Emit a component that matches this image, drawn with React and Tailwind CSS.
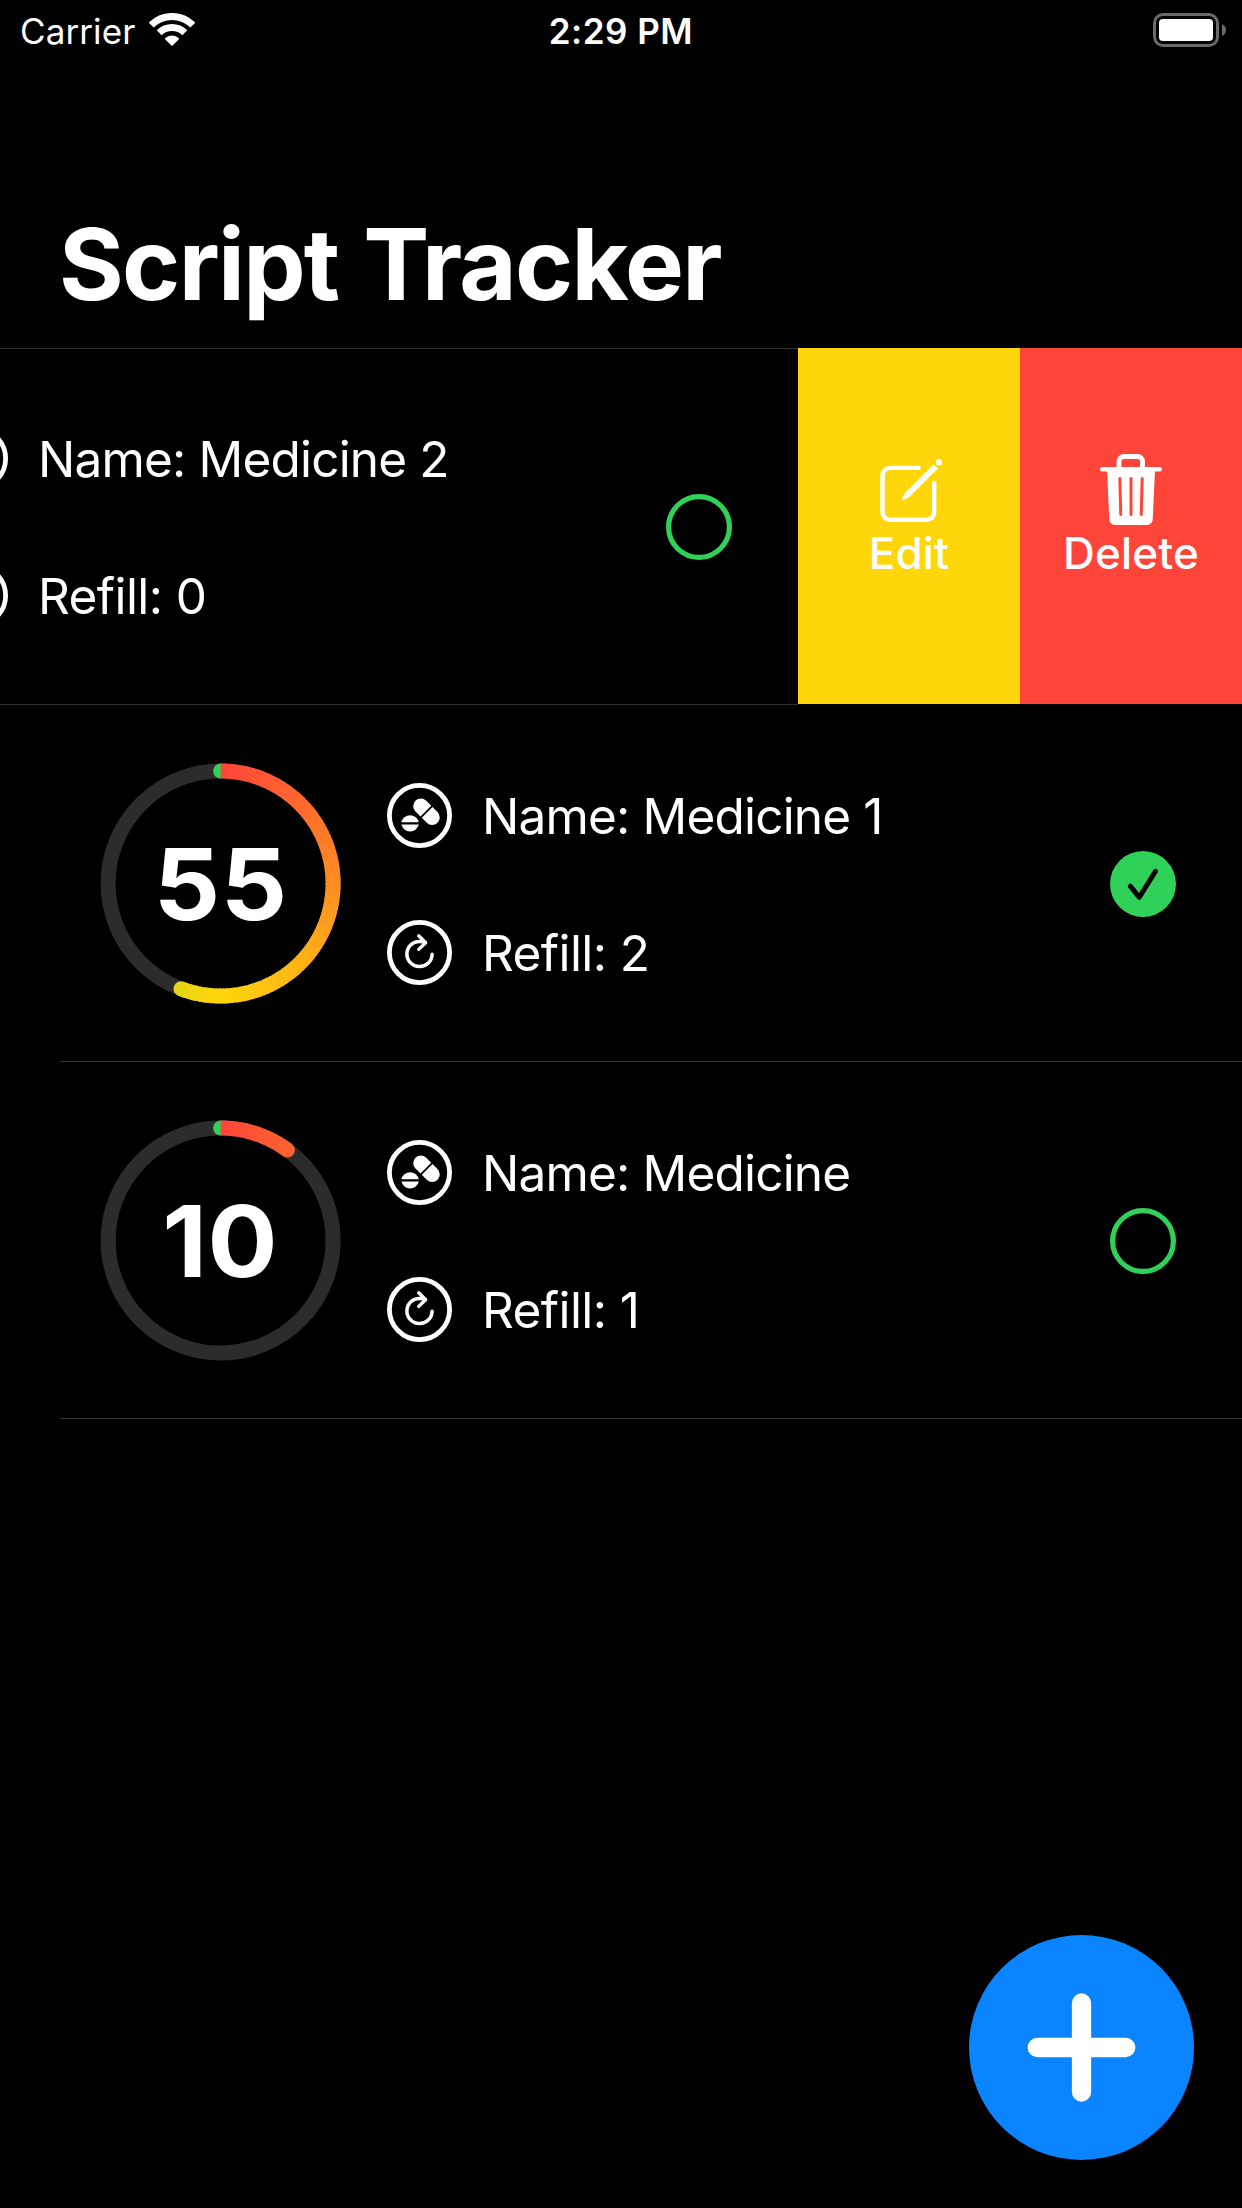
const RED = [255, 69, 58];
const YELLOW = [255, 214, 10];
const GREEN = [48, 209, 88];

const mix = (a, b, t) => `rgb(${a.map((v, i) => Math.round(v + (b[i] - v) * t)).join(",")})`;
const colorAt = (deg) =>
  deg <= 180 ? mix(RED, YELLOW, deg / 180) : mix(YELLOW, GREEN, (deg - 180) / 180);

const CX = 119.6;
const CY = 119.5;
const R = 112.5;
const point = (deg) => {
  const a = (deg * Math.PI) / 180;
  return [CX + R * Math.sin(a), CY - R * Math.cos(a)];
};

function Ring({ value, sweep }) {
  const step = 2;
  const arcs = [];
  for (let d = 0; d < sweep; d += step) {
    const [x1, y1] = point(d);
    const [x2, y2] = point(Math.min(d + step + 0.6, sweep));
    arcs.push(
      <path key={d} d={`M${x1} ${y1}A${R} ${R} 0 0 1 ${x2} ${y2}`} stroke={colorAt(d + step / 2)} />
    );
  }
  const [ex, ey] = point(sweep);
  return (
    <div className="grid size-60 shrink-0 place-items-center">
      <svg className="col-start-1 row-start-1 size-60 overflow-visible" viewBox="0 0 240 240" fill="none" strokeWidth="15">
        <circle cx={CX} cy={CY} r={R} stroke="#2c2c2c" />
        <circle cx={CX} cy={CY - R} r="7.5" fill="rgb(48,209,88)" />
        <circle cx={ex} cy={ey} r="7.5" fill={colorAt(sweep)} />
        {arcs}
      </svg>
      <span className="col-start-1 row-start-1 mr-[1px] scale-x-[1.05] text-[99px] leading-none font-bold tracking-[0.5px]">{value}</span>
    </div>
  );
}

function PillsIcon() {
  return (
    <svg className="size-[65px] shrink-0" viewBox="0 0 65 65" fill="none">
      <circle cx="32.5" cy="32.5" r="30.1" stroke="white" strokeWidth="4.8" />
      <g transform="translate(39.5 28.8) rotate(45)" fill="white">
        <path d="M-0.9 -7.6H-8a7.6 7.6 0 0 0 0 15.2H-0.9Z" />
        <path d="M0.9 -7.6H8a7.6 7.6 0 0 1 0 15.2H0.9Z" />
      </g>
      <path d="M14.4 39.2a8.9 8.9 0 0 1 17.4 0Z" fill="white" />
      <path d="M14.4 41.4a8.9 8.9 0 0 0 17.4 0Z" fill="white" />
    </svg>
  );
}

function RefillIcon() {
  return (
    <svg className="size-[65px] shrink-0" viewBox="0 0 65 65" fill="none" stroke="white" strokeLinecap="round" strokeLinejoin="round">
      <circle cx="32.5" cy="32.5" r="30.1" strokeWidth="4.8" />
      <path d="M45.1 34.2a12.6 12.6 0 1 1 -12.6 -12.8c2.2 0 3.8 .2 5.4 .7" strokeWidth="3.5" />
      <path d="M31.7 15.8l7 6.9l-7 6.7" strokeWidth="3.3" />
    </svg>
  );
}

function Status({ done }) {
  return (
    <svg className="size-[66px] shrink-0" viewBox="0 0 66 66" fill="none">
      {done ? (
        <>
          <circle cx="33" cy="33" r="33" fill="#30d158" />
          <path d="M20.3 35.1l9 11.2l16.2-26" stroke="black" strokeWidth="5" strokeLinecap="round" strokeLinejoin="round" />
        </>
      ) : (
        <circle cx="33" cy="33" r="30.4" stroke="#30d158" strokeWidth="5.2" />
      )}
    </svg>
  );
}

function Script({ value, sweep, name, refill, done, className = "pt-[2px]" }) {
  return (
    <div className={`flex h-[356px] w-[1242px] shrink-0 items-center pr-[66px] pl-[101px] ${className}`}>
      <Ring value={value} sweep={sweep} />
      <div className="ml-[46px] flex flex-1 flex-col gap-[72px] text-[49.5px] leading-[65px]">
        <div className="flex h-[65px] items-center">
          <PillsIcon />
          <span className="mt-[2px] ml-[30px] tracking-[-0.82px]">Name: {name}</span>
        </div>
        <div className="flex h-[65px] items-center">
          <RefillIcon />
          <span className="mt-[2px] ml-[30px] tracking-[-0.6px]">Refill: {refill}</span>
        </div>
      </div>
      <Status done={done} />
    </div>
  );
}

function EditIcon() {
  return (
    <svg className="h-[72px] w-[66px]" viewBox="0 0 66 72" fill="none">
      <path d="M44.5 13.9H14a7.5 7.5 0 0 0 -7.5 7.5V58.3a7.5 7.5 0 0 0 7.5 7.5H50.7a7.5 7.5 0 0 0 7.5-7.5V27" stroke="white" strokeWidth="4.4" />
      <path d="M42 18L50 10V20L62 22L54 30Z" fill="#ffd60a" />
      <path d="M57.5 10.3L61.8 14.5L33.6 42.7L25.4 47Q25.1 45.8 29.2 38.7Z" fill="white" />
      <circle cx="63" cy="8.3" r="3.2" fill="white" />
    </svg>
  );
}

function TrashIcon() {
  return (
    <svg className="h-[72px] w-[62px]" viewBox="0 0 62 72" fill="none">
      <path d="M19 15V7.5a5 5 0 0 1 5-5H37.5a5 5 0 0 1 5 5V15" stroke="white" strokeWidth="4.8" />
      <rect x="0" y="13" width="62" height="4.6" rx="2.3" fill="white" />
      <path d="M7 16H55L52.7 65.6a5.6 5.6 0 0 1 -5.6 5.3H14.9A5.6 5.6 0 0 1 9.3 65.6Z" fill="white" />
      <path d="M19.8 24.5L20.8 60.5M31 24.5V60.5M42.2 24.5L41.2 60.5" stroke="#ff453a" strokeWidth="3" strokeLinecap="round" />
    </svg>
  );
}

function StatusBar() {
  return (
    <div className="grid h-[60px] grid-cols-3 items-start px-5 text-[35px] leading-[62px]">
      <div className="flex items-start">
        <span className="tracking-[0.1px]">Carrier</span>
        <svg className="mt-[13px] ml-[14px] h-[33px] w-[46px]" viewBox="0 0 46 33" fill="none" stroke="white">
          <path d="M2.2 12.1a29.4 29.4 0 0 1 41.6 0" strokeWidth="7" />
          <path d="M10.2 19.8a18.4 18.4 0 0 1 25.6 0" strokeWidth="7" />
          <path d="M23 33L16 26.2Q15.8 25.4 17 24.6Q23 20.6 29 24.6Q30.2 25.4 30 26.2Z" fill="white" stroke="none" />
        </svg>
      </div>
      <span className="text-center font-semibold tracking-[0.5px]">2:29 PM</span>
      <svg className="mt-[13px] -mr-[5px] h-[34px] w-[74px] justify-self-end" viewBox="0 0 74 34" fill="none">
        <rect x="1.5" y="1.5" width="63" height="31" rx="8.5" stroke="#6a6a6a" strokeWidth="3" />
        <rect x="6" y="6" width="54" height="22" rx="4" fill="white" />
        <path d="M69 11q4 2 4 6t-4 6Z" fill="#6a6a6a" />
      </svg>
    </div>
  );
}

export default function App() {
  return (
    <div className="relative flex h-[2208px] w-[1242px] flex-col overflow-hidden bg-black font-['Inter',sans-serif] text-white">
      <StatusBar />
      <h1 className="h-72 pt-[144px] pl-[59px] text-[99px] leading-[120px] font-bold tracking-[-1.7px] [word-spacing:3px]">Script Tracker</h1>

      <div className="flex h-[356px] justify-end overflow-hidden">
        <Script value="" sweep={0} name="Medicine 2" refill="0" className="border-t border-[#323235] pt-px" />
        <div className="flex shrink-0 text-[44px] leading-[52px] font-medium tracking-[0.15px]">
          <button className="flex h-[356px] w-[222px] flex-col items-center bg-[#ffd60a] pt-[106px]">
            <EditIcon />
            <span className="mt-px">Edit</span>
          </button>
          <button className="flex h-[356px] w-[222px] flex-col items-center bg-[#ff453a] pt-[106px]">
            <TrashIcon />
            <span className="mt-px">Delete</span>
          </button>
        </div>
      </div>
      <div className="h-px w-[798px] bg-[#323235]" />

      <Script value="55" sweep={200.6} name="Medicine 1" refill="2" done />
      <div className="ml-[60px] h-px bg-[#323235]" />
      <Script value="10" sweep={36.4} name="Medicine" refill="1" />
      <div className="ml-[60px] h-px bg-[#323235]" />

      <button className="absolute right-12 bottom-12 grid size-[225px] place-items-center rounded-full bg-[#0a84ff]" aria-label="Add script">
        <svg className="size-[109px]" viewBox="0 0 109 109" stroke="white" strokeWidth="19.3" strokeLinecap="round">
          <path d="M54.5 10V99M10.2 54.5H98.8" />
        </svg>
      </button>
    </div>
  );
}
